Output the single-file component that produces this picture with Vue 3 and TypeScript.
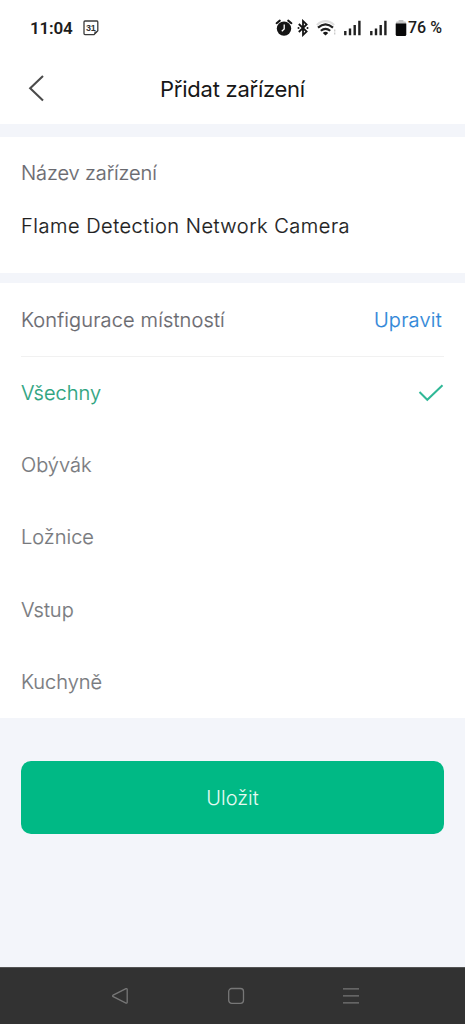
<script setup lang="ts">
import { ref } from 'vue'

const rooms: string[] = ['Všechny', 'Obývák', 'Ložnice', 'Vstup', 'Kuchyně']
const selected = ref<string>('Všechny')
const signals: number[] = [1, 2]
</script>

<template>
  <div class="screen">
    <header class="status">
      <span class="clock">11:04</span>
      <svg class="calendar" width="16" height="16" viewBox="0 0 16 16">
        <path d="M2 1H14Q14.8 1 14.8 2V10.8L11 14.6H2Q1 14.6 1 13.6V2Q1 1 2 1Z" fill="none" stroke="#3b3b3b" stroke-width="1.3" />
        <path d="M11.4 11.4H14.8L11.4 14.8Z" fill="#3b3b3b" />
        <text x="7.8" y="10.9" text-anchor="middle" class="day">31</text>
      </svg>
      <div class="indicators">
        <svg width="18" height="18" viewBox="0 0 18 18">
          <path d="M1.6 4.2L4.8 1.6M16.4 4.2L13.2 1.6" stroke="#151515" stroke-width="2" stroke-linecap="round" />
          <circle cx="9" cy="9.6" r="7.2" fill="#151515" />
          <path d="M9.2 5.6V10L6.8 12.3" stroke="#fff" stroke-width="1.3" fill="none" />
        </svg>
        <svg class="bluetooth" width="12" height="18" viewBox="0 0 12 18">
          <path d="M1.8 5L9.6 12.6L6 16V2L9.6 5.4L1.8 13" fill="none" stroke="#151515" stroke-width="1.8" />
          <circle cx="1.5" cy="9" r="1" fill="#151515" />
          <circle cx="10.5" cy="9" r="1" fill="#151515" />
        </svg>
        <svg class="wifi" width="22" height="18" viewBox="0 0 22 18">
          <path d="M0.8 5.9Q9.5 -1.6 18.2 5.9" fill="none" stroke="#dedede" stroke-width="2" />
          <path d="M2 8.6Q9.5 2 17 8.6" fill="none" stroke="#202020" stroke-width="2.2" />
          <path d="M4.8 11.8Q9.5 7.8 14.2 11.8" fill="none" stroke="#202020" stroke-width="2.1" />
          <path d="M6.8 14Q9.5 11.6 12.2 14L9.5 16.6Z" fill="#151515" />
          <path d="M18.7 10.5V12.5M18.7 13.5V15.5" stroke="#ccc" stroke-width="1.4" />
        </svg>
        <svg v-for="s in signals" :key="s" class="signal" width="18" height="18" viewBox="0 0 18 18">
          <path d="M2.3 12V16.3M7 9.5V16.3M11.7 6V16.3M16.4 1.8V16.3" stroke="#202020" stroke-width="2.4" />
        </svg>
        <svg class="battery" width="12" height="18" viewBox="0 0 12 18">
          <path d="M3.6 1H8.4V2.6H10Q11 2.6 11 4V6H1V4Q1 2.6 2 2.6H3.6Z" fill="#c4c4c4" />
          <path d="M0.7 4.5H11.3V15.4Q11.3 17 9.8 17H2.2Q0.7 17 0.7 15.4Z" fill="#080808" />
        </svg>
        <span class="percent">76 %</span>
      </div>
    </header>

    <div class="titlebar">
      <svg class="back" width="18" height="28" viewBox="0 0 18 28">
        <path d="M16 2L3.2 14.2L16 26.4" fill="none" stroke="#4b4b4b" stroke-width="2.1" />
      </svg>
      <h1>Přidat zařízení</h1>
    </div>

    <section class="device">
      <div class="label name">Název zařízení</div>
      <div class="value">Flame Detection Network Camera</div>
    </section>

    <section class="config">
      <div class="config-head">
        <span class="label">Konfigurace místností</span>
        <a class="edit">Upravit</a>
      </div>
      <div
        v-for="room in rooms"
        :key="room"
        class="room"
        :class="{ active: room === selected }"
        @click="selected = room"
      >
        <span>{{ room }}</span>
        <svg v-if="room === selected" width="26" height="18" viewBox="0 0 26 18">
          <path d="M1.5 8L9.3 15.8L24.5 1.2" fill="none" stroke="#30b897" stroke-width="2" />
        </svg>
      </div>
    </section>

    <div class="actions">
      <button class="save">Uložit</button>
    </div>

    <nav class="navbar">
      <svg width="18" height="18" viewBox="0 0 18 18">
        <path d="M15 1.6L2.2 8.1Q1 9 2.2 9.7L15 16.1Q16.2 16.4 16.2 15.2V2.5Q16.2 1.3 15 1.6Z" fill="none" stroke="#777" stroke-width="1.3" />
      </svg>
      <svg width="18" height="18" viewBox="0 0 18 18">
        <rect x="1.7" y="1.5" width="14.8" height="14.8" rx="3" fill="none" stroke="#777" stroke-width="1.3" />
      </svg>
      <svg width="18" height="18" viewBox="0 0 18 18">
        <path d="M1 1.8H17M1 8.8H17M1 15.8H17" stroke="#777" stroke-width="1.3" />
      </svg>
    </nav>
  </div>
</template>

<style>
body {
  margin: 0;
  background: #f3f5fa;
}
</style>

<style scoped>
.screen {
  box-sizing: border-box;
  width: 465px;
  height: 1024px;
  display: flex;
  flex-direction: column;
  overflow: hidden;
  background: #f3f5fa;
  font-family: Inter, Roboto, sans-serif;
  font-size: 20px;
  font-weight: 300;
  line-height: 28px;
}
svg {
  display: block;
  flex: none;
}
.status {
  height: 56px;
  box-sizing: border-box;
  flex: none;
  padding: 0 23px 0 30px;
  display: flex;
  align-items: center;
  background: #fff;
  font-family: Roboto, sans-serif;
  color: #1c1c1c;
}
.clock {
  width: 43px;
  font-size: 17px;
  font-weight: 600;
  letter-spacing: -0.2px;
  white-space: nowrap;
}
.calendar {
  margin-left: 10px;
}
.day {
  font-family: "Liberation Sans", sans-serif;
  font-size: 9px;
  font-weight: 700;
  letter-spacing: -0.3px;
  fill: #333;
}
.indicators {
  display: flex;
  align-items: center;
  margin-left: auto;
}
.bluetooth {
  margin-left: 4px;
}
.wifi {
  margin-left: 7px;
}
.signal {
  margin-left: 5px;
}
.signal + .signal {
  margin-left: 8px;
}
.battery {
  margin-left: 8px;
}
.percent {
  width: 34px;
  margin-left: 1px;
  font-size: 16px;
  font-weight: 500;
  white-space: nowrap;
}
.titlebar {
  height: 68px;
  flex: none;
  display: grid;
  grid-template-columns: 60px 1fr 60px;
  align-items: center;
  background: #fff;
}
.back {
  margin-left: 27px;
  margin-bottom: 4px;
}
h1 {
  margin: 0 0 3px;
  text-align: center;
  font-size: 22px;
  font-weight: 400;
  letter-spacing: -0.25px;
  color: #171717;
}
.device {
  height: 136px;
  box-sizing: border-box;
  flex: none;
  margin-top: 13px;
  padding: 22px 21px 0;
  background: #fff;
}
.device,
.config {
  -webkit-text-stroke: 0.2px currentColor;
}
.label {
  color: #69696f;
}
.label.name {
  letter-spacing: -0.1px;
}
.value {
  margin-top: 25px;
  color: #202020;
  letter-spacing: 0.51px;
  white-space: nowrap;
}
.config {
  flex: none;
  height: 435px;
  margin-top: 10px;
  padding: 0 21px;
  box-sizing: border-box;
  background: #fff;
}
.config-head {
  height: 73.5px;
  box-sizing: border-box;
  border-bottom: 1px solid #f1f1f1;
  display: flex;
  align-items: center;
  justify-content: space-between;
  padding-right: 2px;
}
.config-head .label {
  padding-top: 1px;
  letter-spacing: 0.15px;
}
.edit {
  padding-top: 1px;
  letter-spacing: 0.25px;
  color: #2e86d8;
}
.room {
  height: 72.4px;
  display: flex;
  align-items: center;
  justify-content: space-between;
  color: #77797d;
}
.room.active {
  color: #2ba37e;
}
.actions {
  padding: 43px 21px 0;
}
.save {
  display: block;
  width: 100%;
  height: 73px;
  padding: 0;
  border: 0;
  border-radius: 10px;
  background: #00b985;
  color: #e6faf2;
  font: inherit;
}
.navbar {
  height: 57px;
  flex: none;
  box-sizing: border-box;
  margin-top: auto;
  padding: 0 105px 0 111px;
  border-top: 1px solid #545454;
  display: flex;
  align-items: center;
  justify-content: space-between;
  background: #323232;
}
</style>
